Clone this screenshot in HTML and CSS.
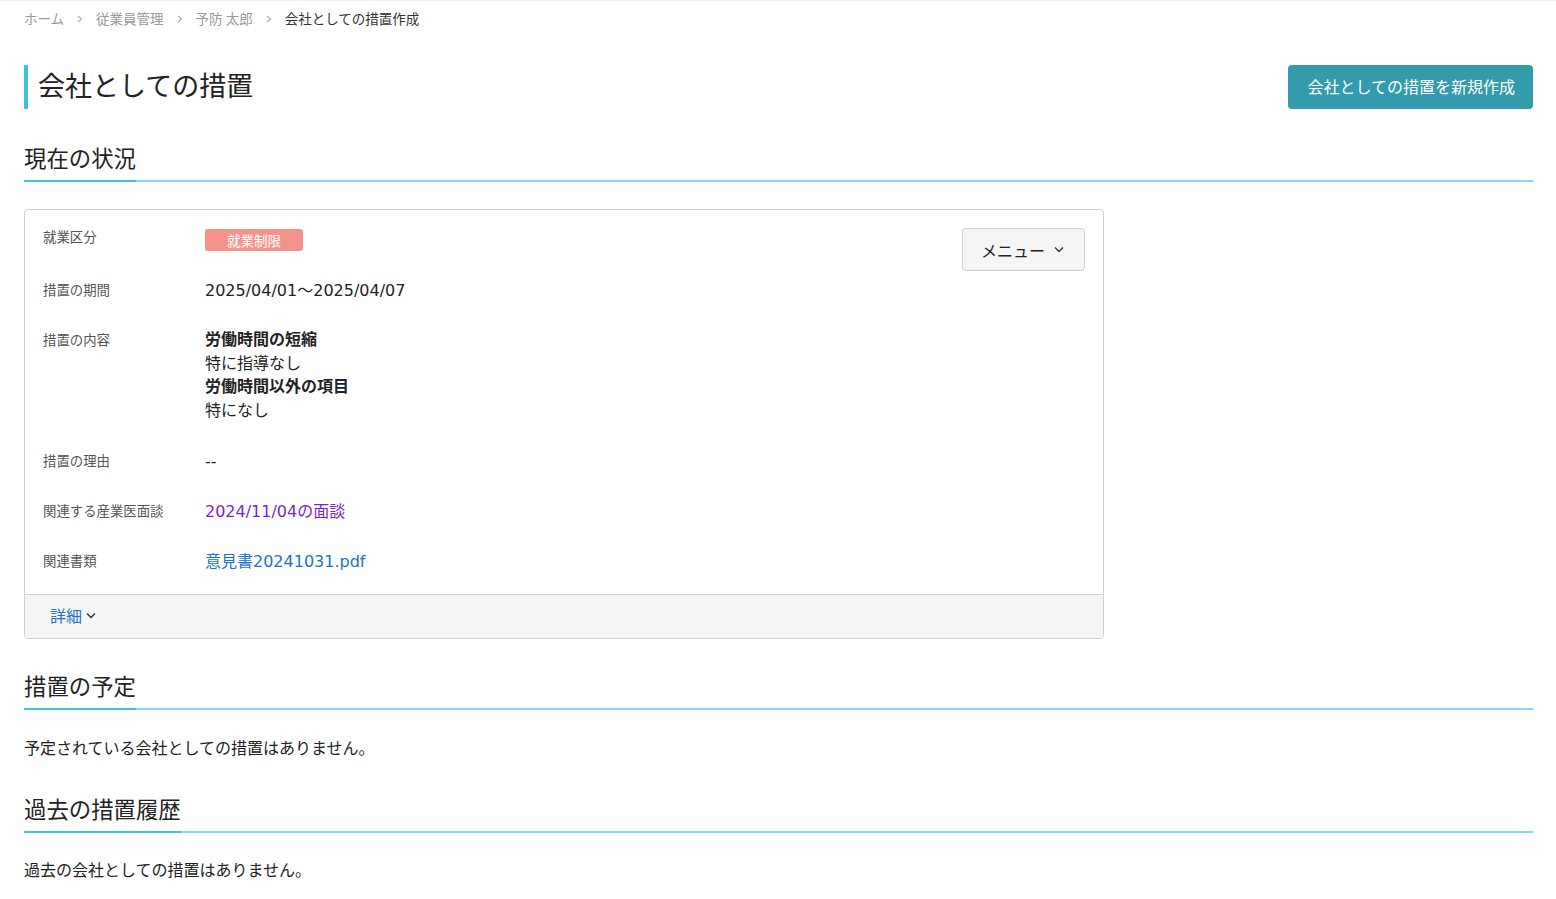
FILE: index.html
```html
<!DOCTYPE html>
<html lang="ja">
<head>
<meta charset="utf-8">
<title>会社としての措置</title>
<link rel="stylesheet" href="styles.css">
</head>
<body>
<nav class="breadcrumb">
  <a class="crumb" href="#">ホーム</a>
  <span class="sep"><svg width="6" height="8" viewBox="0 0 6 8"><polyline points="1,1 4.5,4 1,7" fill="none" stroke="#aaa" stroke-width="1.1"/></svg></span>
  <a class="crumb" href="#">従業員管理</a>
  <span class="sep"><svg width="6" height="8" viewBox="0 0 6 8"><polyline points="1,1 4.5,4 1,7" fill="none" stroke="#aaa" stroke-width="1.1"/></svg></span>
  <a class="crumb" href="#">予防 太郎</a>
  <span class="sep"><svg width="6" height="8" viewBox="0 0 6 8"><polyline points="1,1 4.5,4 1,7" fill="none" stroke="#aaa" stroke-width="1.1"/></svg></span>
  <span class="crumb current">会社としての措置作成</span>
</nav>

<header class="page-header">
  <h1 class="page-title">会社としての措置</h1>
  <button class="primary-btn">会社としての措置を新規作成</button>
</header>

<section class="section current-section">
  <h2 class="section-title"><span>現在の状況</span></h2>
  <div class="card">
    <div class="card-body">
      <dl class="info">
        <div class="row">
          <dt>就業区分</dt>
          <dd><span class="badge">就業制限</span></dd>
        </div>
        <div class="row">
          <dt>措置の期間</dt>
          <dd class="latin">2025/04/01〜2025/04/07</dd>
        </div>
        <div class="row">
          <dt>措置の内容</dt>
          <dd>
            <div class="strong">労働時間の短縮</div>
            <div>特に指導なし</div>
            <div class="strong">労働時間以外の項目</div>
            <div>特になし</div>
          </dd>
        </div>
        <div class="row">
          <dt>措置の理由</dt>
          <dd class="latin">--</dd>
        </div>
        <div class="row">
          <dt>関連する産業医面談</dt>
          <dd class="latin"><a class="link visited" href="#">2024/11/04の面談</a></dd>
        </div>
        <div class="row">
          <dt>関連書類</dt>
          <dd class="latin"><a class="link" href="#">意見書20241031.pdf</a></dd>
        </div>
      </dl>
      <button class="menu-btn">メニュー<svg class="chev" width="10" height="7" viewBox="0 0 10 7"><polyline points="1,1.5 5,5.5 9,1.5" fill="none" stroke="#333" stroke-width="1.4"/></svg></button>
    </div>
    <div class="card-footer">
      <a class="detail-link" href="#">詳細<svg class="chev" width="10" height="7" viewBox="0 0 10 7"><polyline points="1,1.5 5,5.5 9,1.5" fill="none" stroke="#333" stroke-width="1.4"/></svg></a>
    </div>
  </div>
</section>

<section class="section planned-section">
  <h2 class="section-title"><span>措置の予定</span></h2>
  <p class="empty">予定されている会社としての措置はありません。</p>
</section>

<section class="section history-section">
  <h2 class="section-title"><span>過去の措置履歴</span></h2>
  <p class="empty">過去の会社としての措置はありません。</p>
</section>
</body>
</html>
```

FILE: styles.css
```css
* { box-sizing: border-box; }

html, body { background: #fff; }

body {
  margin: 0;
  padding: 8px 23px 20px 24px;
  border-top: 1px solid #f2f2f2;
  font-family: "DejaVu Sans", "Noto Sans CJK JP", sans-serif;
  color: #222;
}

.breadcrumb {
  display: flex;
  align-items: center;
  height: 18px;
  font-family: "Noto Sans CJK JP", sans-serif;
  font-size: 13.5px;
  line-height: 18px;
}
.crumb { color: #999; text-decoration: none; }
.crumb.current { color: #333; }
.sep { display: inline-flex; margin: 1px 13px 0 13px; }

.page-header {
  display: flex;
  justify-content: space-between;
  align-items: center;
  margin-top: 38px;
}
.page-title {
  margin: 0;
  height: 44px;
  border-left: 4px solid #3cc3d8;
  padding-left: 10px;
  font-family: "Noto Sans CJK JP", sans-serif;
  font-weight: 400;
  font-size: 27px;
  line-height: 40px;
  color: #222;
}
.primary-btn {
  height: 44px;
  padding: 0 18px 3px 19px;
  border: none;
  border-radius: 4px;
  background: #339bac;
  color: #fff;
  font-family: "Noto Sans CJK JP", sans-serif;
  font-size: 16px;
  line-height: 24px;
}

.section-title {
  margin: 0;
  border-bottom: 2px solid #80dde8;
  font-family: "Noto Sans CJK JP", sans-serif;
  font-weight: 400;
  font-size: 22.4px;
  line-height: 33px;
  color: #222;
}
.section-title span {
  display: inline-block;
  padding-bottom: 6px;
  margin-bottom: -2px;
  border-bottom: 2px solid #3cc3d8;
}
.current-section { margin-top: 32px; }
.planned-section { margin-top: 30px; }
.history-section { margin-top: 33px; }

.card {
  margin-top: 27px;
  width: 1080px;
  border: 1px solid #d0d0d0;
  border-radius: 4px;
  overflow: hidden;
}
.card-body {
  display: flex;
  align-items: flex-start;
  padding: 14px 18px 22px 18px;
}
.info { flex: 1; margin: 0; }
.row {
  display: grid;
  grid-template-columns: 162px 1fr;
  margin-bottom: 26px;
}
.row:last-child { margin-bottom: 0; }
dt {
  font-family: "Noto Sans CJK JP", sans-serif;
  font-size: 13.4px;
  line-height: 24px;
  color: #555;
}
dd {
  margin: 0;
  font-family: "Noto Sans CJK JP", sans-serif;
  font-size: 16px;
  line-height: 23.7px;
  color: #222;
}
dd.latin {
  font-family: "DejaVu Sans", "Noto Sans CJK JP", sans-serif;
  padding-top: 3px;
  line-height: 21px;
}
.strong { font-weight: 700; }
.badge {
  display: inline-block;
  height: 22px;
  margin-top: 5px;
  padding: 0 22px;
  border-radius: 3px;
  background: #f4938a;
  color: #fff;
  font-size: 13.5px;
  line-height: 22px;
  vertical-align: top;
}
.link { color: #1b74c9; text-decoration: none; }
.link.visited { color: #7b1fcf; }

.menu-btn {
  display: flex;
  align-items: center;
  height: 43px;
  margin-top: 4px;
  padding: 0 20px 0 18px;
  border: 1px solid #cfcfcf;
  border-radius: 4px;
  background: #f5f5f5;
  color: #222;
  font-family: "Noto Sans CJK JP", sans-serif;
  font-size: 16px;
}
.chev { margin-left: 9px; }

.card-footer {
  height: 44px;
  padding: 0 25px 2px;
  background: #f5f5f5;
  border-top: 1px solid #d0d0d0;
  display: flex;
  align-items: center;
}
.detail-link {
  display: flex;
  align-items: center;
  color: #1b74c9;
  text-decoration: none;
  font-family: "Noto Sans CJK JP", sans-serif;
  font-size: 16px;
}
.detail-link .chev { margin-left: 4px; }

.empty {
  margin: 25px 0 0;
  font-family: "Noto Sans CJK JP", sans-serif;
  font-size: 16px;
  line-height: 24px;
  color: #222;
}
.history-section .empty { margin-top: 24px; }
```
